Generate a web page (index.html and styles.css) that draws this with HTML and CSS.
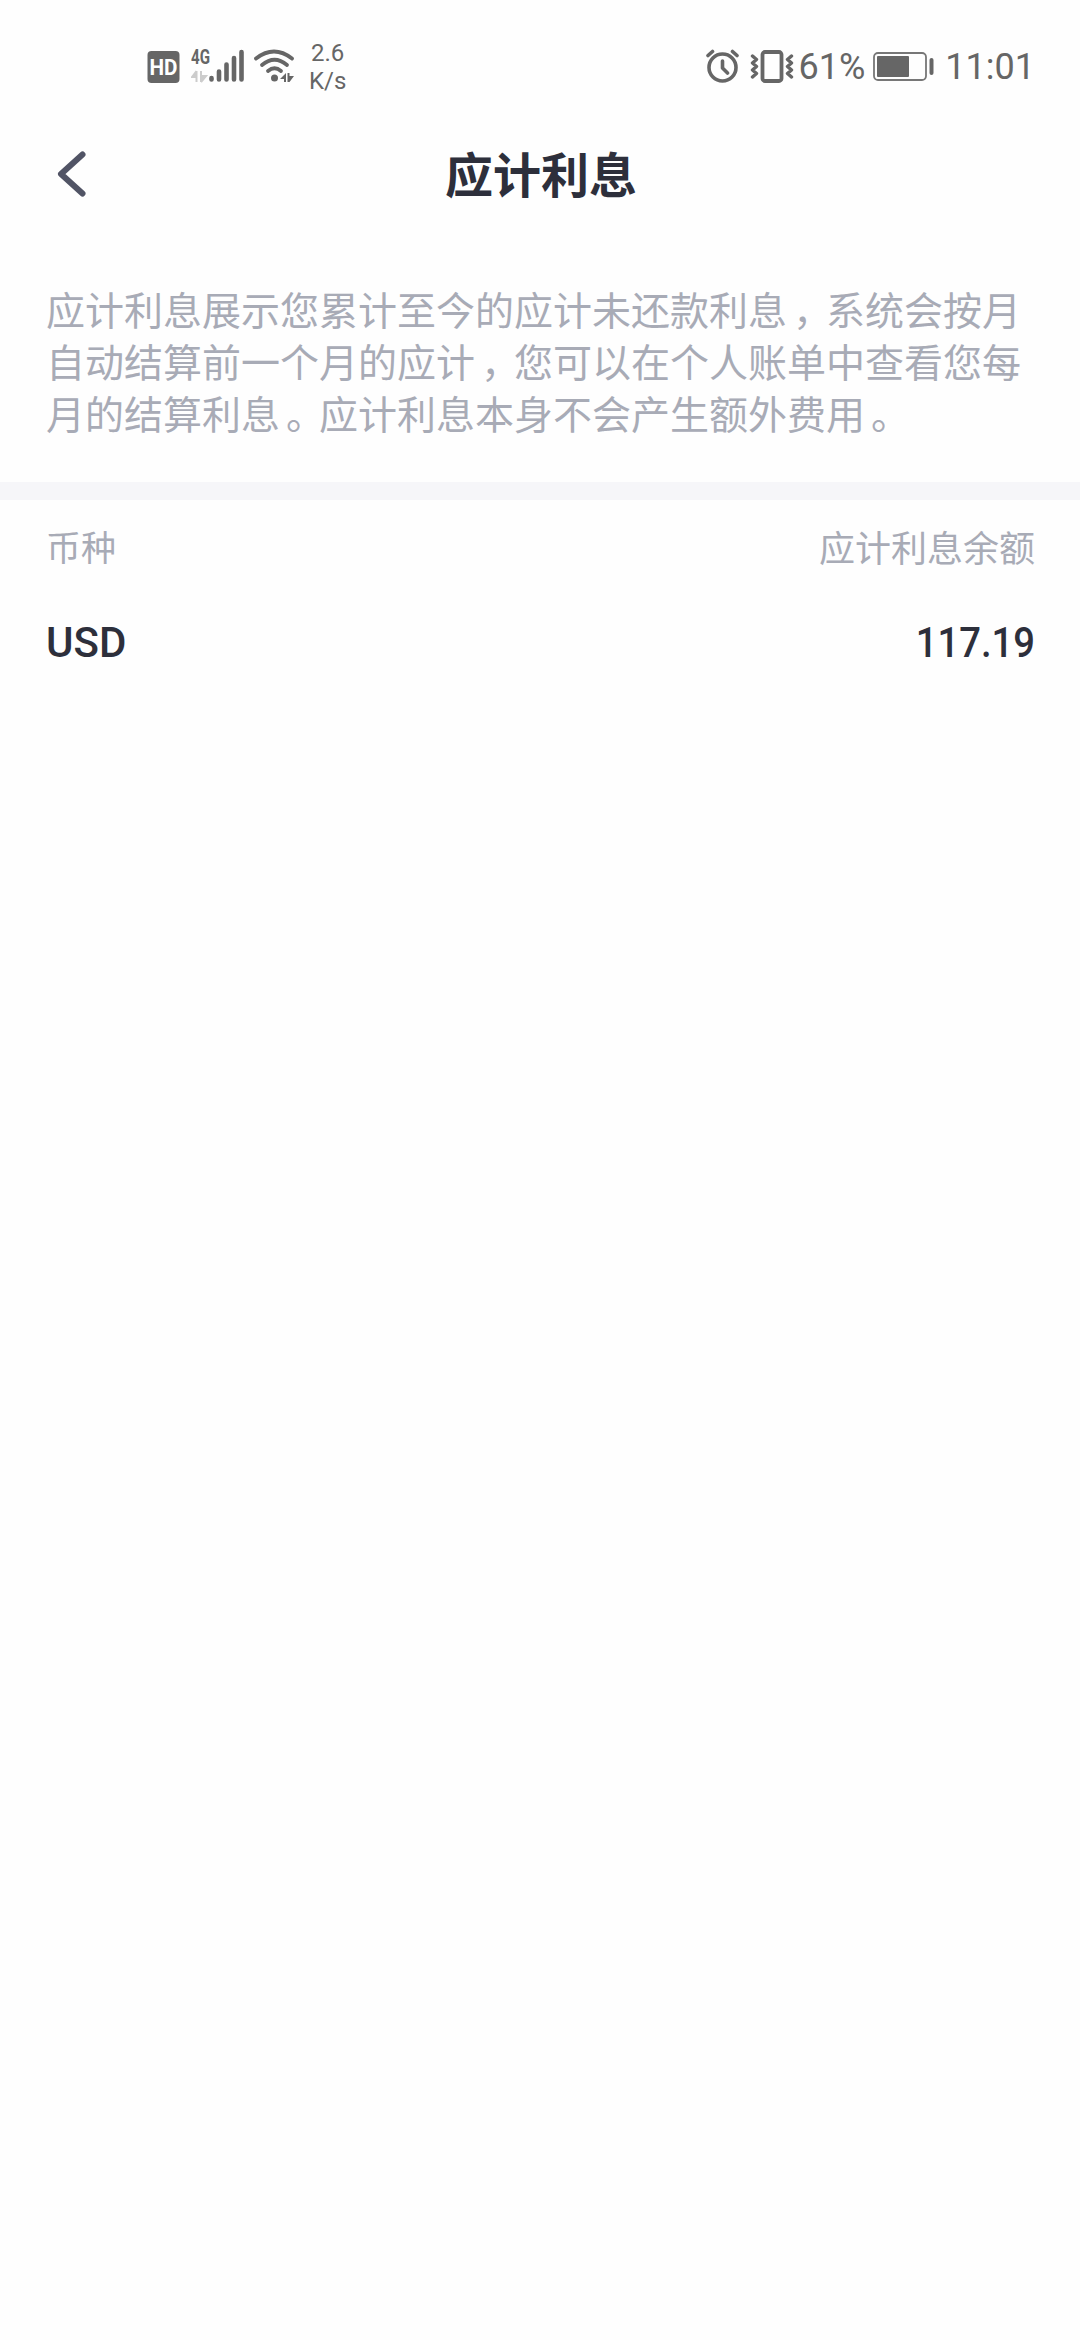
FILE: index.html
```
<!DOCTYPE html>
<html lang="zh-CN">
<head>
    <meta charset="UTF-8">
    <meta name="viewport" content="width=device-width, initial-scale=1.0">
    <title>应计利息</title>
    <link rel="stylesheet" href="styles.css">
</head>
<body>
    <div class="status-bar">
        <div class="status-left">
            <svg class="icon-hd" width="34" height="40" viewBox="0 0 34 40">
                <rect x="1.500" y="5" width="32" height="32" rx="4" fill="#666"/>
                <text x="17.500" y="28.500" text-anchor="middle" textLength="28" lengthAdjust="spacingAndGlyphs" font-size="22" font-weight="700" fill="#fff">HD</text>
            </svg>
            <svg class="icon-signal" width="54" height="40" viewBox="0 0 54 40">
                <text x="0" y="18" textLength="19" lengthAdjust="spacingAndGlyphs" font-size="20" font-weight="700" fill="#666">4G</text>
                <path d="M5.500 25v11M5.500 25l-4.500 6h4.500M10 36V25M10 25v5h5l-5 6" fill="#ccc" stroke="#ccc" stroke-width="2"/>
                <path d="M20.500 32v1.500M28 25.500v8M35.500 18.500v15M43 12v21.500M50.500 6v27.500" stroke="#666" stroke-width="4.600" stroke-linecap="round"/>
            </svg>
            <svg class="icon-wifi" width="42" height="40" viewBox="0 0 42 40">
                <g fill="none" stroke="#666" stroke-width="3.800" stroke-linecap="round">
                    <path d="M2 12.500Q20 -1.500 38 12.500"/>
                    <path d="M8 19Q20.500 8.500 33 19"/>
                    <path d="M14 25Q20.500 19.500 27 25"/>
                </g>
                <circle cx="20.500" cy="32" r="3.500" fill="#666"/>
                <path d="M32 27v9h-2v-3h-4zM33.500 27v9h2l4.500-6h-4.500v-3z" fill="#666"/>
            </svg>
            <div class="speed">
                <span>2.6</span>
                <span>K/s</span>
            </div>
        </div>
        <div class="status-right">
            <svg class="icon-alarm" width="34" height="40" viewBox="0 0 34 40">
                <g fill="none" stroke="#666" stroke-width="3.600" stroke-linecap="round" stroke-linejoin="round">
                    <circle cx="16.500" cy="21.500" r="13.500"/>
                    <path d="M16.500 15v7l5 5M2 9.500l4.500-4M31 9.500l-4.500-4"/>
                </g>
            </svg>
            <svg class="icon-vibrate" width="44" height="40" viewBox="0 0 44 40">
                <g fill="none" stroke="#666" stroke-linecap="round" stroke-linejoin="round">
                    <rect x="12.500" y="6" width="19" height="29" rx="2.500" stroke-width="3.800"/>
                    <path d="M2.500 10l4 3.500-4 3.500 4 3.500-4 3.500 4 3.500-4 3.500M41.500 10l-4 3.500 4 3.500-4 3.500 4 3.500-4 3.500 4 3.500" stroke-width="3.400"/>
                </g>
            </svg>
            <span class="percent">61%</span>
            <svg class="icon-battery" width="62" height="40" viewBox="0 0 62 40">
                <rect x="1" y="7" width="52" height="27" rx="4" fill="none" stroke="#777" stroke-width="1.800"/>
                <rect x="4" y="10" width="32" height="21" rx="1" fill="#666"/>
                <path d="M58.500 14v13" stroke="#666" stroke-width="4" stroke-linecap="round"/>
            </svg>
            <span class="time">11:01</span>
        </div>
    </div>

    <header class="nav">
        <a class="back" href="#" aria-label="返回">
            <svg width="32" height="48" viewBox="0 0 32 48">
                <path d="M26.500 4.500L5 24l21.500 19.500" fill="none" stroke="#515465" stroke-width="6" stroke-linecap="round" stroke-linejoin="round"/>
            </svg>
        </a>
        <h1>应计利息</h1>
    </header>

    <p class="intro">应计利息展示您累计至今的应计未还款利息<span class="mark">，</span>系统会按月<br>自动结算前一个月的应计<span class="mark">，</span>您可以在个人账单中查看您每<br>月的结算利息<span class="mark">。</span>应计利息本身不会产生额外费用<span class="mark">。</span></p>

    <div class="divider"></div>

    <div class="row row-head">
        <span class="label-currency">币种</span>
        <span>应计利息余额</span>
    </div>
    <div class="row row-data">
        <span class="currency">USD</span>
        <span class="amount">117.19</span>
    </div>
</body>
</html>
```
FILE: styles.css
```
body {
    margin: 0;
    padding: 0;
    min-height: 2340px;
    background-color: #fefefe;
    color: #2d2f3b;
    font-family: Roboto, "Noto Sans CJK SC", sans-serif;
}
svg {
    display: block;
    flex: none;
}
.status-bar {
    display: flex;
    justify-content: space-between;
    align-items: center;
    height: 132px;
    padding: 0 45px 0 146px;
    color: #666;
}
.status-left, .status-right {
    display: flex;
    align-items: center;
}
.icon-signal {
    margin-left: 11px;
}
.icon-wifi {
    margin-left: 9px;
    margin-right: 13px;
}
.speed {
    display: flex;
    flex-direction: column;
    align-items: center;
    padding-top: 2px;
    font-size: 24px;
    font-weight: 370;
    line-height: 28px;
}
.icon-vibrate {
    margin-left: 10px;
    margin-right: 5px;
}
.icon-battery {
    margin-left: 8px;
    margin-right: 10px;
}
.percent, .time {
    padding-top: 2px;
    font-size: 36px;
    font-weight: 370;
    line-height: 40px;
}
.nav {
    position: relative;
    display: flex;
    align-items: center;
    justify-content: center;
    height: 88px;
}
.back {
    position: absolute;
    left: 56px;
    top: 18px;
}
.nav h1 {
    margin: 0;
    padding: 2px 0 0 2px;
    font-size: 48px;
    line-height: 88px;
    font-weight: 700;
}
.intro {
    margin: 0;
    padding: 66px 46px 40px;
    font-size: 39px;
    line-height: 52px;
    color: #a8abb6;
    white-space: nowrap;
}
/* punctuation sits a little right of its default place */
.mark {
    padding-left: 6px;
    letter-spacing: -6px;
}
.divider {
    height: 18px;
    background-color: #f6f6f9;
}
.row {
    display: flex;
    justify-content: space-between;
    align-items: center;
    padding: 0 45px 0 46px;
}
.row-head {
    height: 91px;
    font-size: 36px;
    color: #a8abb6;
}
.label-currency {
    font-size: 35px;
}
.row-data {
    height: 102px;
    font-size: 42px;
    font-weight: 500;
}
.amount {
    transform: scaleX(0.91);
    transform-origin: right center;
}
```
